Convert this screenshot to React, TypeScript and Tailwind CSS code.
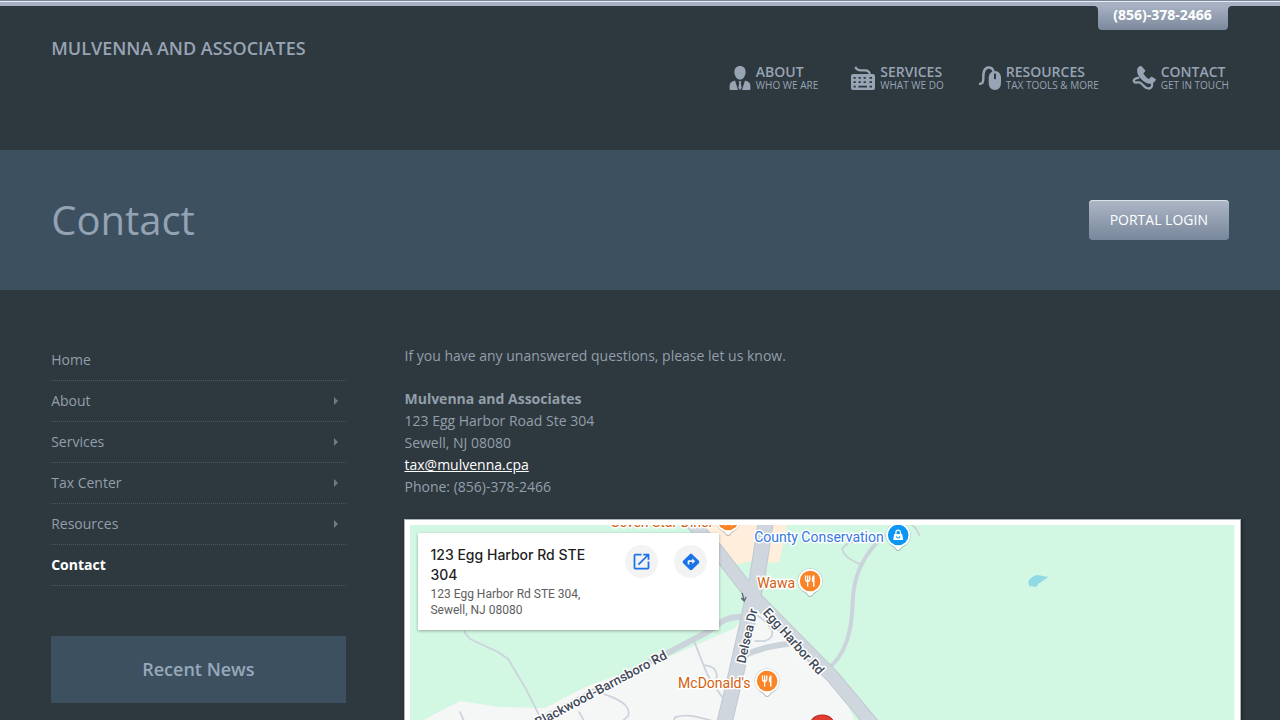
import type { ReactNode } from "react";
import { MdDirections, MdOpenInNew } from "react-icons/md";

function PersonIcon() {
  return (
    <svg viewBox="0 0 24 24" className="size-6 shrink-0" fill="currentColor" aria-hidden="true">
      <path d="M13 0c3.600 0 5.600 2.500 5.600 5.900 0 3.900-2.300 7.600-5.600 7.600S7.400 9.800 7.400 5.900C7.400 2.500 9.400 0 13 0z" />
      <path d="M8 14.500 11 24H3.600C3 24 2.600 23.600 2.600 23v-3.200C2.600 16.800 4.800 15.100 8 14.500z" />
      <path d="M18 14.500 15 24h7.400c.6 0 1-.4 1-1v-3.200c0-3-2.200-4.700-5.400-5.300z" />
      <path d="M11.700 15.200h2.600l-.5 2.200.9 4.400L13 24l-1.700-2.200.9-4.400z" />
    </svg>
  );
}

function KeyboardIcon() {
  return (
    <svg viewBox="0 0 24 24" className="size-6 shrink-0" fill="currentColor" aria-hidden="true">
      <path
        d="M4.500.8c.6 2.800 2.300 3.600 5.500 3.600h4c3 0 4.700.8 5 4.600"
        fill="none"
        stroke="currentColor"
        strokeWidth="2.200"
      />
      <path
        fillRule="evenodd"
        d="M2 8h20a2 2 0 0 1 2 2v12a2 2 0 0 1-2 2H2a2 2 0 0 1-2-2V10a2 2 0 0 1 2-2zM2.500 11v1.800h2.200v-1.800zM7.600 11v1.800h2.200v-1.800zM12.600 11v1.800h2.200v-1.800zM18.500 11v1.800h2.500v-1.800zM2.500 15.300v1.800h2.200v-1.800zM7.600 15.300v1.800h2.200v-1.800zM12.600 15.300v1.800h2.200v-1.800zM18.500 15.300v1.800h2.500v-1.800zM2.500 19.700v1.800h2.200v-1.800zM7.300 19.700v1.800h8.700v-1.800zM18.500 19.700v1.800h2.500v-1.800z"
      />
    </svg>
  );
}

function MouseIcon() {
  return (
    <svg viewBox="0 0 24 24" className="size-6 shrink-0" fill="none" aria-hidden="true">
      <path
        d="M2 17.800c3.800.4 4.300-1.800 4.300-5 0-4-.4-10.700 4.900-11.300 3-.3 4.800 1.500 5.500 4.200"
        stroke="currentColor"
        strokeWidth="2.400"
      />
      <path
        fill="currentColor"
        fillRule="evenodd"
        d="M18 5c3.700 0 6 3 6 6.800v5c0 4.200-2.300 7.200-6 7.200s-6.300-3-6.300-7.200v-5C11.700 8 14.300 5 18 5zM17 8.400v3.800c0 .6.400 1 1 1s1-.4 1-1V8.400c0-.6-.4-1-1-1s-1 .4-1 1z"
      />
    </svg>
  );
}

function PhoneIcon() {
  return (
    <svg viewBox="0 0 24 24" className="size-6 shrink-0" fill="currentColor" aria-hidden="true">
      <path d="M8.600.100C6.500.700 5.100 2.100 5.100 4.700c0 3 1.600 6 4.400 8.700 2.700 2.600 5.700 4.500 8.800 4.300 3-.2 4.700-2 5.500-3.700.2-.5.100-.9-.3-1.100l-3.200-2c-.5-.3-1-.2-1.400.2l-1.500 1.500c-.4.400-.8.400-1.200.1-1.900-1.200-3.500-2.900-4.500-4.700-.3-.5-.2-.9.200-1.200L13 5.600c.4-.3.500-.7.300-1.200L10.100.7C9.700.200 9.200-.1 8.600.100z" />
      <path
        d="M7.300 11.800C4.300 11.600.300 13.800 2.300 16c1.700 1.900 4-.9 6.300.8 2.600 1.900 4.200 5.900 8.300 5.700 2.700-.2 3.700-2.500 3-5.500"
        fill="none"
        stroke="currentColor"
        strokeWidth="2.300"
      />
    </svg>
  );
}

type NavItem = { title: string; note: string; icon: ReactNode };

const navItems: NavItem[] = [
  { title: "ABOUT", note: "WHO WE ARE", icon: <PersonIcon /> },
  { title: "SERVICES", note: "WHAT WE DO", icon: <KeyboardIcon /> },
  { title: "RESOURCES", note: "TAX TOOLS & MORE", icon: <MouseIcon /> },
  { title: "CONTACT", note: "GET IN TOUCH", icon: <PhoneIcon /> },
];

const sideLinks = [
  { label: "Home", children: false },
  { label: "About", children: true },
  { label: "Services", children: true },
  { label: "Tax Center", children: true },
  { label: "Resources", children: true },
  { label: "Contact", children: false, current: true },
];

function Header() {
  return (
    <header className="relative border-t border-[#7b889b]">
      <div className="h-[5px] border-t border-[#e9edf3] bg-[#a6b1c2]" />
      <div className="absolute top-[5px] right-[4.1%] flex h-6 w-[130px] items-start justify-center rounded-b bg-linear-to-b from-[#a6b1c2] to-[#7b899c]">
        <svg viewBox="0 0 4 4" className="absolute top-0 -left-1 size-1" fill="#a6b1c2" aria-hidden="true">
          <path d="M0 0h4v4C4 1.500 2.500 0 0 0z" />
        </svg>
        <svg viewBox="0 0 4 4" className="absolute top-0 -right-1 size-1" fill="#a6b1c2" aria-hidden="true">
          <path d="M4 0H0v4C0 1.500 1.500 0 4 0z" />
        </svg>
        <a href="tel:8563782466" className="text-sm leading-[18px] font-bold text-white">
          (856)-378-2466
        </a>
      </div>
      <div className="flex h-36 items-start justify-between px-[4%]">
        <a href="#home" className="pt-[30px] text-lg leading-6 font-semibold text-[#97a4b4]">
          MULVENNA AND ASSOCIATES
        </a>
        <nav className="pt-[59px]" aria-label="Main">
          <ul className="flex gap-[33px]">
            {navItems.map((item) => (
              <li key={item.title}>
                <a href={`#${item.title.toLowerCase()}`} className="flex items-center gap-[5px] text-[#97a4b4]">
                  {item.icon}
                  <span className="flex flex-col">
                    <span className="text-sm leading-[14px] font-semibold">{item.title}</span>
                    <span className="text-[10px] leading-3">{item.note}</span>
                  </span>
                </a>
              </li>
            ))}
          </ul>
        </nav>
      </div>
    </header>
  );
}

function Sidebar() {
  return (
    <aside className="w-1/4">
      <nav aria-label="Section">
        <ul>
          {sideLinks.map((link) => (
            <li key={link.label} className="border-b border-dotted border-[#4b5863]">
              <a
                href={`#${link.label}`}
                className={
                  link.current
                    ? "flex h-10 items-center text-sm font-bold text-white"
                    : "flex h-10 items-center justify-between pr-2 text-sm text-[#929faa]"
                }
              >
                {link.label}
                {link.children && (
                  <svg viewBox="0 0 4 8" className="h-2 w-1" fill="#6f7b86" aria-hidden="true">
                    <path d="M0 0l4 4-4 4z" />
                  </svg>
                )}
              </a>
            </li>
          ))}
        </ul>
      </nav>
      <h2 className="mt-[50px] bg-[#3d5060] py-5 text-center text-lg leading-[27px] font-semibold text-[#97a8bb]">
        Recent News
      </h2>
    </aside>
  );
}

function Pin({ x, y, color, children }: { x: number; y: number; color: string; children?: ReactNode }) {
  return (
    <g transform={`translate(${x} ${y})`}>
      <path
        d="M0 16c-1.500 0-2.500-1.300-3.800-3.300C-8 10.500-12.500 6.500-12.500 0a12.500 12.500 0 0 1 25 0c0 6.500-4.500 10.500-8.700 12.700C2.500 14.700 1.500 16 0 16z"
        fill="#5f6b73"
        opacity="0.450"
      />
      <path
        d="M0 15c-1.300 0-2.300-1.300-3.600-3.200C-8 10-12.200 6.500-12.200 0a12.200 12.200 0 0 1 24.400 0c0 6.500-4.200 10-8.600 11.800C2.300 13.700 1.300 15 0 15z"
        fill="#fff"
      />
      <circle r="10.300" fill={color} />
      {children}
    </g>
  );
}

function Cutlery() {
  return (
    <g fill="none" stroke="#fff" strokeWidth="1.300">
      <path d="M-4.600-5.500v4c0 1.200.9 1.800 2.100 1.800S-.4-.3-.4-1.500v-4M-2.500-5.500v11" />
      <path d="M3.600 5.500v-11" strokeWidth="1.500" />
      <path d="M3.500-5.500C1.500-5 1.500-1 1.800 1h2z" fill="#fff" stroke="none" />
    </g>
  );
}

function MapDrawing() {
  return (
    <svg
      viewBox="410 525 824 400"
      preserveAspectRatio="xMidYMin slice"
      className="block h-[400px] w-full"
      role="img"
      aria-label="Map around 123 Egg Harbor Rd"
    >
      <rect x="410" y="525" width="824" height="400" fill="#d2f7e2" />
      <path d="M695 525h92l-8 38-26-2-20 4z" fill="#feeedb" />
      <path
        d="M410 727l50-26 40 6 45 1 40-21 88-32 62-27 12-18 23-2 67 72 12 28 14 30 30 40v147H410z"
        fill="#f5f6f6"
      />
      <g fill="none" stroke="#ccd4db" strokeLinejoin="round" strokeLinecap="round">
        <g strokeWidth="1.800">
          <path d="M462 620l3 13 5 6 28 13 10 7 18 30 13 26" />
          <path d="M883 542c-14-5-36-2-41 7 2 9 12 12 19 16" />
          <path d="M912 525l4 4 3 6M460 712l6 13" />
          <path d="M694 641l13 33 6 10 9 13M704 665c10 1 12 5 13 11l-4 8" />
          <path d="M579 712l8 14M604 694c18 6 27 13 24 22l-7 6 20 20M672 725l3-8c15-4 25 1 38 4" />
          <path d="M755 641h9c6-1 9-5 8-10-3-7-8-11-14-15" />
        </g>
        <path d="M884 536c-18 15-29 36-31 58-1 22-2 37-8 51-4 11-10 17-18 25" strokeWidth="4" />
        <path d="M535 722l138-72 34-18c12-8 18-15 31-15h12" strokeWidth="6" />
        <path d="M747 654c14-6 25-8 46-11" strokeWidth="6" />
      </g>
      <g fill="none" strokeLinejoin="round">
        <path d="M766 520l-9 58-9 42-13 58-16 67" stroke="#bfc8d0" strokeWidth="16" />
        <path d="M685 515l33 37 31 40 83 84 60 72" stroke="#bfc8d0" strokeWidth="14" />
        <path d="M766 520l-9 58-9 42-13 58-16 67" stroke="#cfd6de" strokeWidth="14" />
        <path d="M685 515l33 37 31 40 83 84 60 72" stroke="#cfd6de" strokeWidth="12" />
      </g>
      <path d="M1028 583c0-4 5-7 9-8l11 2-10 7-2 3-7-1z" fill="#90dae5" />
      <path d="M742 593l2 8m-3-3 3 3 2-4" fill="none" stroke="#5d6970" strokeWidth="1.300" />
      <g
        fontFamily="Roboto, sans-serif"
        stroke="#fff"
        strokeWidth="3"
        strokeLinejoin="round"
        paintOrder="stroke"
      >
        <g fontSize="13" fontWeight="500" fill="#3f4b5a">
          <text transform="translate(538 727) rotate(-28)">Blackwood-Barnsboro Rd</text>
          <text transform="translate(745 664) rotate(-77)">Delsea Dr</text>
          <text transform="translate(762 613) rotate(48)">Egg Harbor Rd</text>
        </g>
        <g fontSize="14" fill="#d2600f">
          <text x="611" y="527">Seven Star Diner</text>
          <text x="757" y="588">Wawa</text>
          <text x="678" y="688">McDonald's</text>
        </g>
        <text x="754" y="542" fontSize="14" fill="#3578e5">
          County Conservation
        </text>
      </g>
      <Pin x={728} y={520} color="#fb8526">
        <Cutlery />
      </Pin>
      <Pin x={810} y={581} color="#fb8526">
        <Cutlery />
      </Pin>
      <Pin x={767} y={681} color="#fb8526">
        <Cutlery />
      </Pin>
      <Pin x={898} y={535} color="#0b96f5">
        <path d="M-4-1h8l1 6H-5z" fill="#fff" />
        <path d="M-2.300-1v-1.500a2.300 2.300 0 0 1 4.600 0V-1" fill="none" stroke="#fff" strokeWidth="1.300" />
        <path d="M-1.700 1.200a1.700 1.700 0 0 0 3.400 0" fill="none" stroke="#0b96f5" />
      </Pin>
      <path
        d="M822 715c-8 0-13.500 6-13.500 13.500 0 11 11 14 13.500 28 2.500-14 13.500-17 13.500-28C835.500 721 830 715 822 715z"
        fill="#e23b30"
        stroke="#b8271f"
      />
      <circle cx="822" cy="728" r="4.500" fill="#a11b14" />
    </svg>
  );
}

function MapPanel() {
  return (
    <section className="relative mt-[21px] w-[calc(100%+12px)] border border-[#adb4b8] bg-white p-[5px] shadow-[1px_1px_3px_rgba(0,0,0,0.4)]">
      <MapDrawing />
      <div className="absolute top-[13px] left-[13px] flex w-[301px] justify-between bg-white p-3 shadow-[0_1px_3px_rgba(0,0,0,0.3)]">
        <div className="w-[170px]">
          <h2 className="font-[Inter,sans-serif] text-sm leading-5 font-medium text-[#1f1f1f]">
            123 Egg Harbor Rd STE 304
          </h2>
          <p className="mt-px font-[Roboto,sans-serif] text-xs leading-4 text-[#5e5e5e]">
            123 Egg Harbor Rd STE 304,
            <br />
            Sewell, NJ 08080
          </p>
        </div>
        <div className="flex gap-4">
          <button
            type="button"
            aria-label="Open in Maps"
            className="flex size-[33px] items-center justify-center rounded-full bg-[#f3f3f4] text-[#1a73e8]"
          >
            <MdOpenInNew size={21} />
          </button>
          <button
            type="button"
            aria-label="Directions"
            className="flex size-[33px] items-center justify-center rounded-full bg-[#f3f3f4] text-[#1a73e8]"
          >
            <MdDirections size={20} />
          </button>
        </div>
      </div>
    </section>
  );
}

export default function App() {
  return (
    <div className="min-h-screen overflow-x-hidden bg-[#2e383f] pb-12 font-['Open_Sans',sans-serif] text-sm text-[#929faa]">
      <Header />
      <div className="flex h-[140px] items-center justify-between bg-[#3d5060] px-[4%]">
        <h1 className="text-[40px] leading-[50px] text-[#93a3b4]">Contact</h1>
        <button
          type="button"
          className="h-10 w-[140px] rounded bg-linear-to-b from-[#adb7c6] to-[#78879b] text-sm text-white shadow-[inset_0_1px_0_#dbe1e9]"
        >
          PORTAL LOGIN
        </button>
      </div>
      <div className="flex justify-between px-[4%] pt-[50px]">
        <Sidebar />
        <main className="w-[70%] pt-[5px] leading-[22px]">
          <p>If you have any unanswered questions, please let us know.</p>
          <address className="mt-[21px] not-italic">
            <strong className="font-bold">Mulvenna and Associates</strong>
            <br />
            123 Egg Harbor Road Ste 304
            <br />
            Sewell, NJ 08080
            <br />
            <a href="mailto:tax@mulvenna.cpa" className="text-white underline">
              tax@mulvenna.cpa
            </a>
            <br />
            Phone: (856)-378-2466
          </address>
          <MapPanel />
        </main>
      </div>
    </div>
  );
}
